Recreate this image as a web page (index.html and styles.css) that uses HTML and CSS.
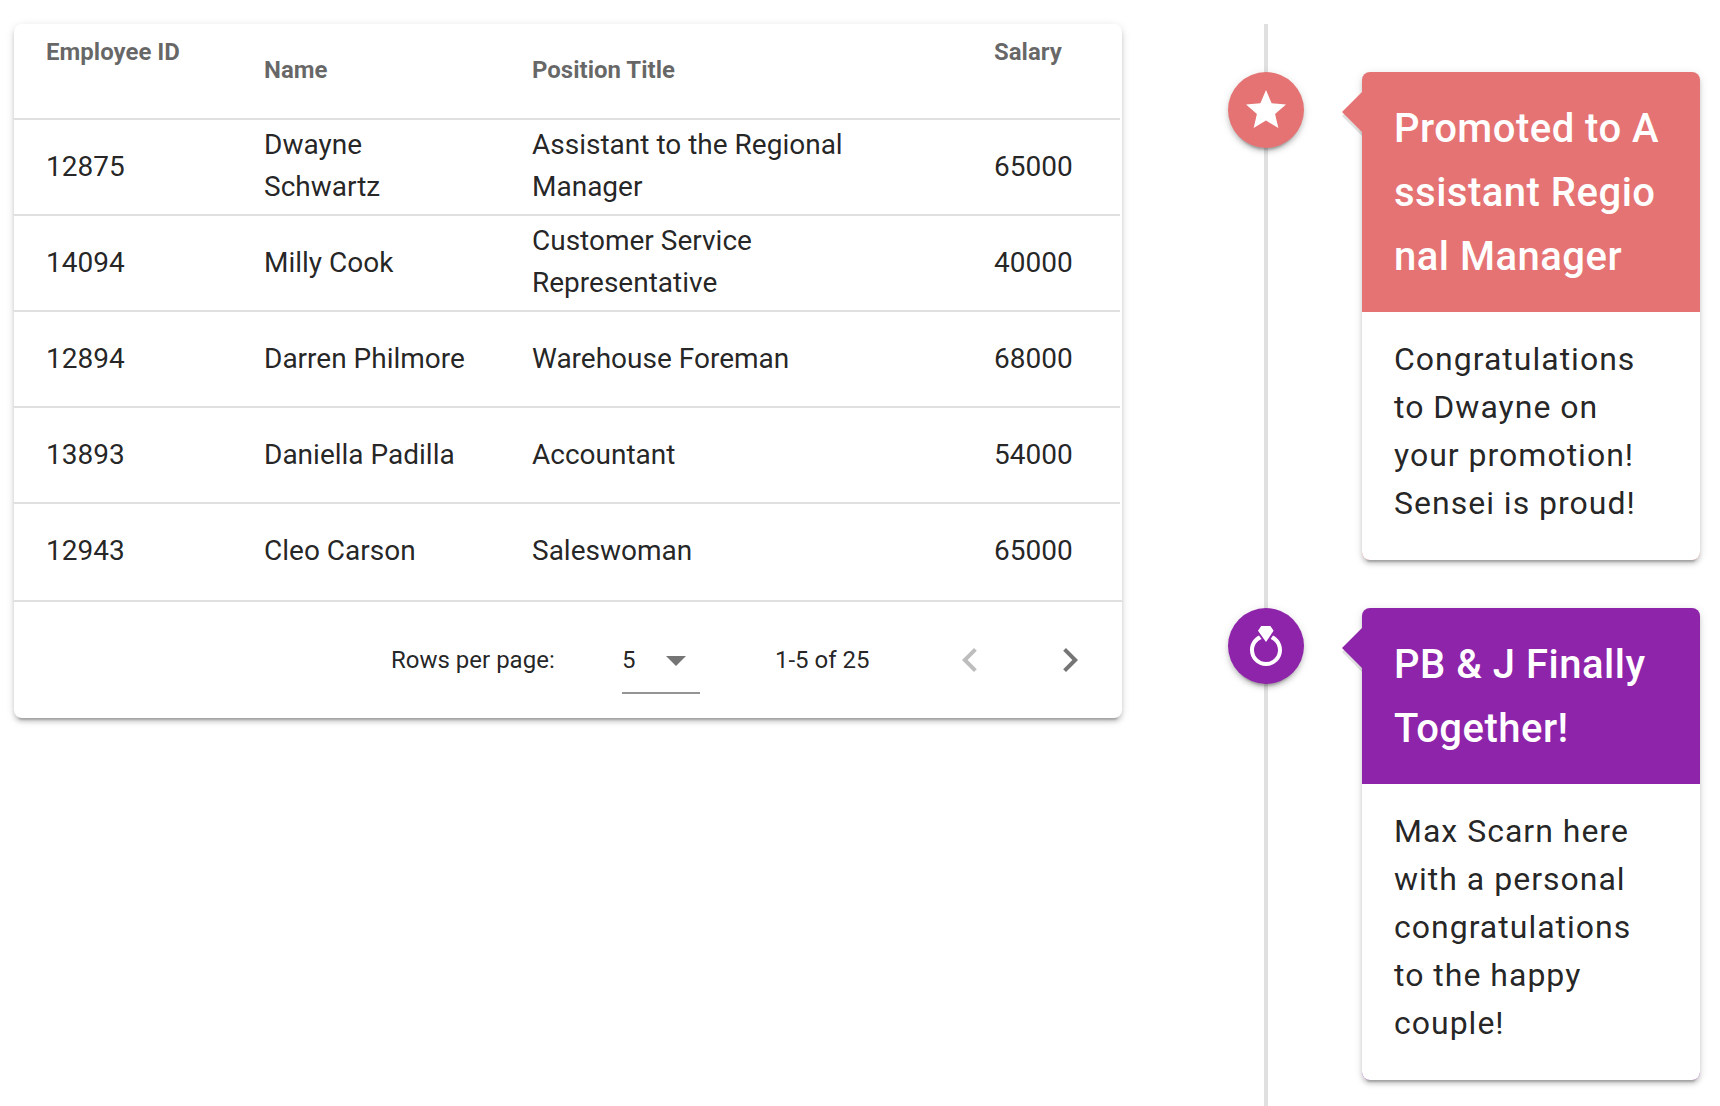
FILE: index.html
```html
<!DOCTYPE html>
<html lang="en">
<head>
<meta charset="utf-8">
<title>Employees</title>
<link rel="stylesheet" href="styles.css">
</head>
<body>
<main class="page">
  <section class="card table-card">
    <table class="employees">
      <colgroup><col class="col-id"><col class="col-name"><col class="col-title"><col class="col-salary"></colgroup>
      <thead>
        <tr><th class="top">Employee ID</th><th>Name</th><th>Position Title</th><th class="top">Salary</th></tr>
      </thead>
      <tbody>
        <tr><td>12875</td><td class="wrap">Dwayne Schwartz</td><td class="wrap">Assistant to the Regional Manager</td><td>65000</td></tr>
        <tr><td>14094</td><td>Milly Cook</td><td class="wrap">Customer Service Representative</td><td>40000</td></tr>
        <tr><td>12894</td><td>Darren Philmore</td><td>Warehouse Foreman</td><td>68000</td></tr>
        <tr><td>13893</td><td>Daniella Padilla</td><td>Accountant</td><td>54000</td></tr>
        <tr><td>12943</td><td>Cleo Carson</td><td>Saleswoman</td><td>65000</td></tr>
      </tbody>
    </table>
    <footer class="pager">
      <span class="pager-label">Rows per page:</span>
      <div class="select">
        <span>5</span>
        <svg class="icon" viewBox="0 0 24 24"><path d="M7,10L12,15L17,10H7Z"/></svg>
      </div>
      <span class="range">1-5 of 25</span>
      <svg class="icon prev" viewBox="0 0 24 24"><path d="M15.41,16.58L10.83,12L15.41,7.41L14,6L8,12L14,18L15.41,16.58Z"/></svg>
      <svg class="icon next" viewBox="0 0 24 24"><path d="M8.59,16.58L13.17,12L8.59,7.41L10,6L16,12L10,18L8.59,16.58Z"/></svg>
    </footer>
  </section>

  <section class="timeline">
    <article class="event red">
      <div class="dot"><svg viewBox="0 0 24 24"><path d="M12,17.27L18.18,21L16.54,13.97L22,9.24L14.81,8.62L12,2L9.19,8.62L2,9.24L7.45,13.97L5.82,21L12,17.27Z"/></svg></div>
      <div class="card event-card">
        <h2 class="break">Promoted to Assistant Regional Manager</h2>
        <p>Congratulations to Dwayne on your promotion! Sensei is proud!</p>
      </div>
    </article>
    <article class="event purple">
      <div class="dot"><svg viewBox="0 0 24 24"><path d="M12,10L8,4.4L9.6,2H14.2L15.8,4.4L12,10M15.5,6.8L14.3,8.5C16.5,9.4 18,11.5 18,14A6,6 0 0,1 12,20A6,6 0 0,1 6,14C6,11.5 7.6,9.4 9.8,8.5L8.5,6.8C5.8,8.1 4,10.8 4,14A8,8 0 0,0 12,22A8,8 0 0,0 20,14C20,10.8 18.2,8.1 15.5,6.8Z"/></svg></div>
      <div class="card event-card">
        <h2>PB &amp; J Finally Together!</h2>
        <p>Max Scarn here with a personal congratulations to the happy couple!</p>
      </div>
    </article>
  </section>
</main>
</body>
</html>
```

FILE: styles.css
```css
* { box-sizing: border-box; }

body {
  margin: 0;
  background: #fff;
  color: rgba(0, 0, 0, .87);
  font-family: Roboto, "Liberation Sans", sans-serif;
}

.page {
  display: flex;
  align-items: flex-start;
  justify-content: space-between;
  height: 1106px;
  padding: 24px 20px 0 14px;
  overflow: hidden;
}

.card {
  border-radius: 8px;
  background: #fff;
  box-shadow: 0 6px 2px -4px rgba(0, 0, 0, .2), 0 4px 4px rgba(0, 0, 0, .14), 0 2px 10px rgba(0, 0, 0, .12);
}

/* Employee table */
.table-card { width: 1108px; }

.employees {
  width: 1106px;
  table-layout: fixed;
  border-collapse: separate;
  border-spacing: 0;
}

.col-id { width: 218px; }
.col-name { width: 268px; }
.col-title { width: 462px; }
.col-salary { width: 158px; }

.employees th,
.employees td {
  height: 96px;
  padding: 0 32px;
  border-bottom: 2px solid rgba(0, 0, 0, .12);
  text-align: left;
  vertical-align: middle;
}

.employees th {
  padding-bottom: 2px;
  color: rgba(0, 0, 0, .6);
  font-size: 24px;
  font-weight: 700;
  line-height: 36px;
}

.employees th.top {
  padding-top: 10px;
  vertical-align: top;
}

.employees td {
  font-size: 28px;
  line-height: 42px;
}

.employees td.wrap { padding-bottom: 2px; }

.employees tbody tr:last-child td {
  padding-bottom: 2px;
  border-bottom: 0;
}

.pager {
  display: flex;
  align-items: center;
  height: 118px;
  padding-right: 28px;
  border-top: 2px solid rgba(0, 0, 0, .12);
  font-size: 24px;
  line-height: 36px;
}

.icon {
  width: 48px;
  height: 48px;
  flex: none;
  fill: rgba(0, 0, 0, .54);
}

.pager-label {
  width: 231px;
  margin-left: auto;
}

.select {
  display: flex;
  align-items: center;
  justify-content: space-between;
  width: 78px;
  height: 68px;
  padding: 2px .5px 0 0;
  border-bottom: 2px solid rgba(0, 0, 0, .42);
}

.range {
  width: 171px;
  margin-left: 75px;
}

.prev { fill: rgba(0, 0, 0, .26); }
.next { margin-left: 52px; }

/* Timeline */
.timeline {
  position: relative;
  display: flex;
  flex-direction: column;
  gap: 48px;
  width: 472px;
  height: 1082px;
  padding-top: 48px;
}

.timeline::before {
  content: "";
  position: absolute;
  top: 0;
  bottom: 0;
  left: 36px;
  width: 4px;
  background: #e0e0e0;
}

.event {
  display: flex;
  align-items: flex-start;
  justify-content: space-between;
}

.red { --accent: #e57373; }
.purple { --accent: #8e24aa; }

.dot {
  position: relative;
  display: flex;
  align-items: center;
  justify-content: center;
  width: 76px;
  height: 76px;
  border-radius: 50%;
  background: var(--accent);
  box-shadow: 0 6px 2px -4px rgba(0, 0, 0, .2), 0 4px 4px rgba(0, 0, 0, .14), 0 2px 10px rgba(0, 0, 0, .12);
}

.dot svg {
  width: 48px;
  height: 48px;
  fill: #fff;
}

.event-card {
  position: relative;
  width: 338px;
  background: var(--accent);
}

.event-card::before,
.event-card::after {
  content: "";
  position: absolute;
  top: 20px;
  left: -20px;
  border: 20px solid transparent;
  border-left: 0;
  border-right-color: var(--accent);
}

.event-card::before {
  top: 24px;
  border-right-color: rgba(0, 0, 0, .12);
}

.event-card h2 {
  margin: 0;
  padding: 25px 32px 23px;
  color: #fff;
  font-size: 40px;
  font-weight: 500;
  line-height: 64px;
  letter-spacing: .5px;
}

.event-card .break { word-break: break-all; }

.event-card p {
  margin: 0;
  padding: 23px 32px 33px;
  border-radius: 0 0 8px 8px;
  background: #fff;
  font-size: 32px;
  line-height: 48px;
  letter-spacing: 1px;
}
```
